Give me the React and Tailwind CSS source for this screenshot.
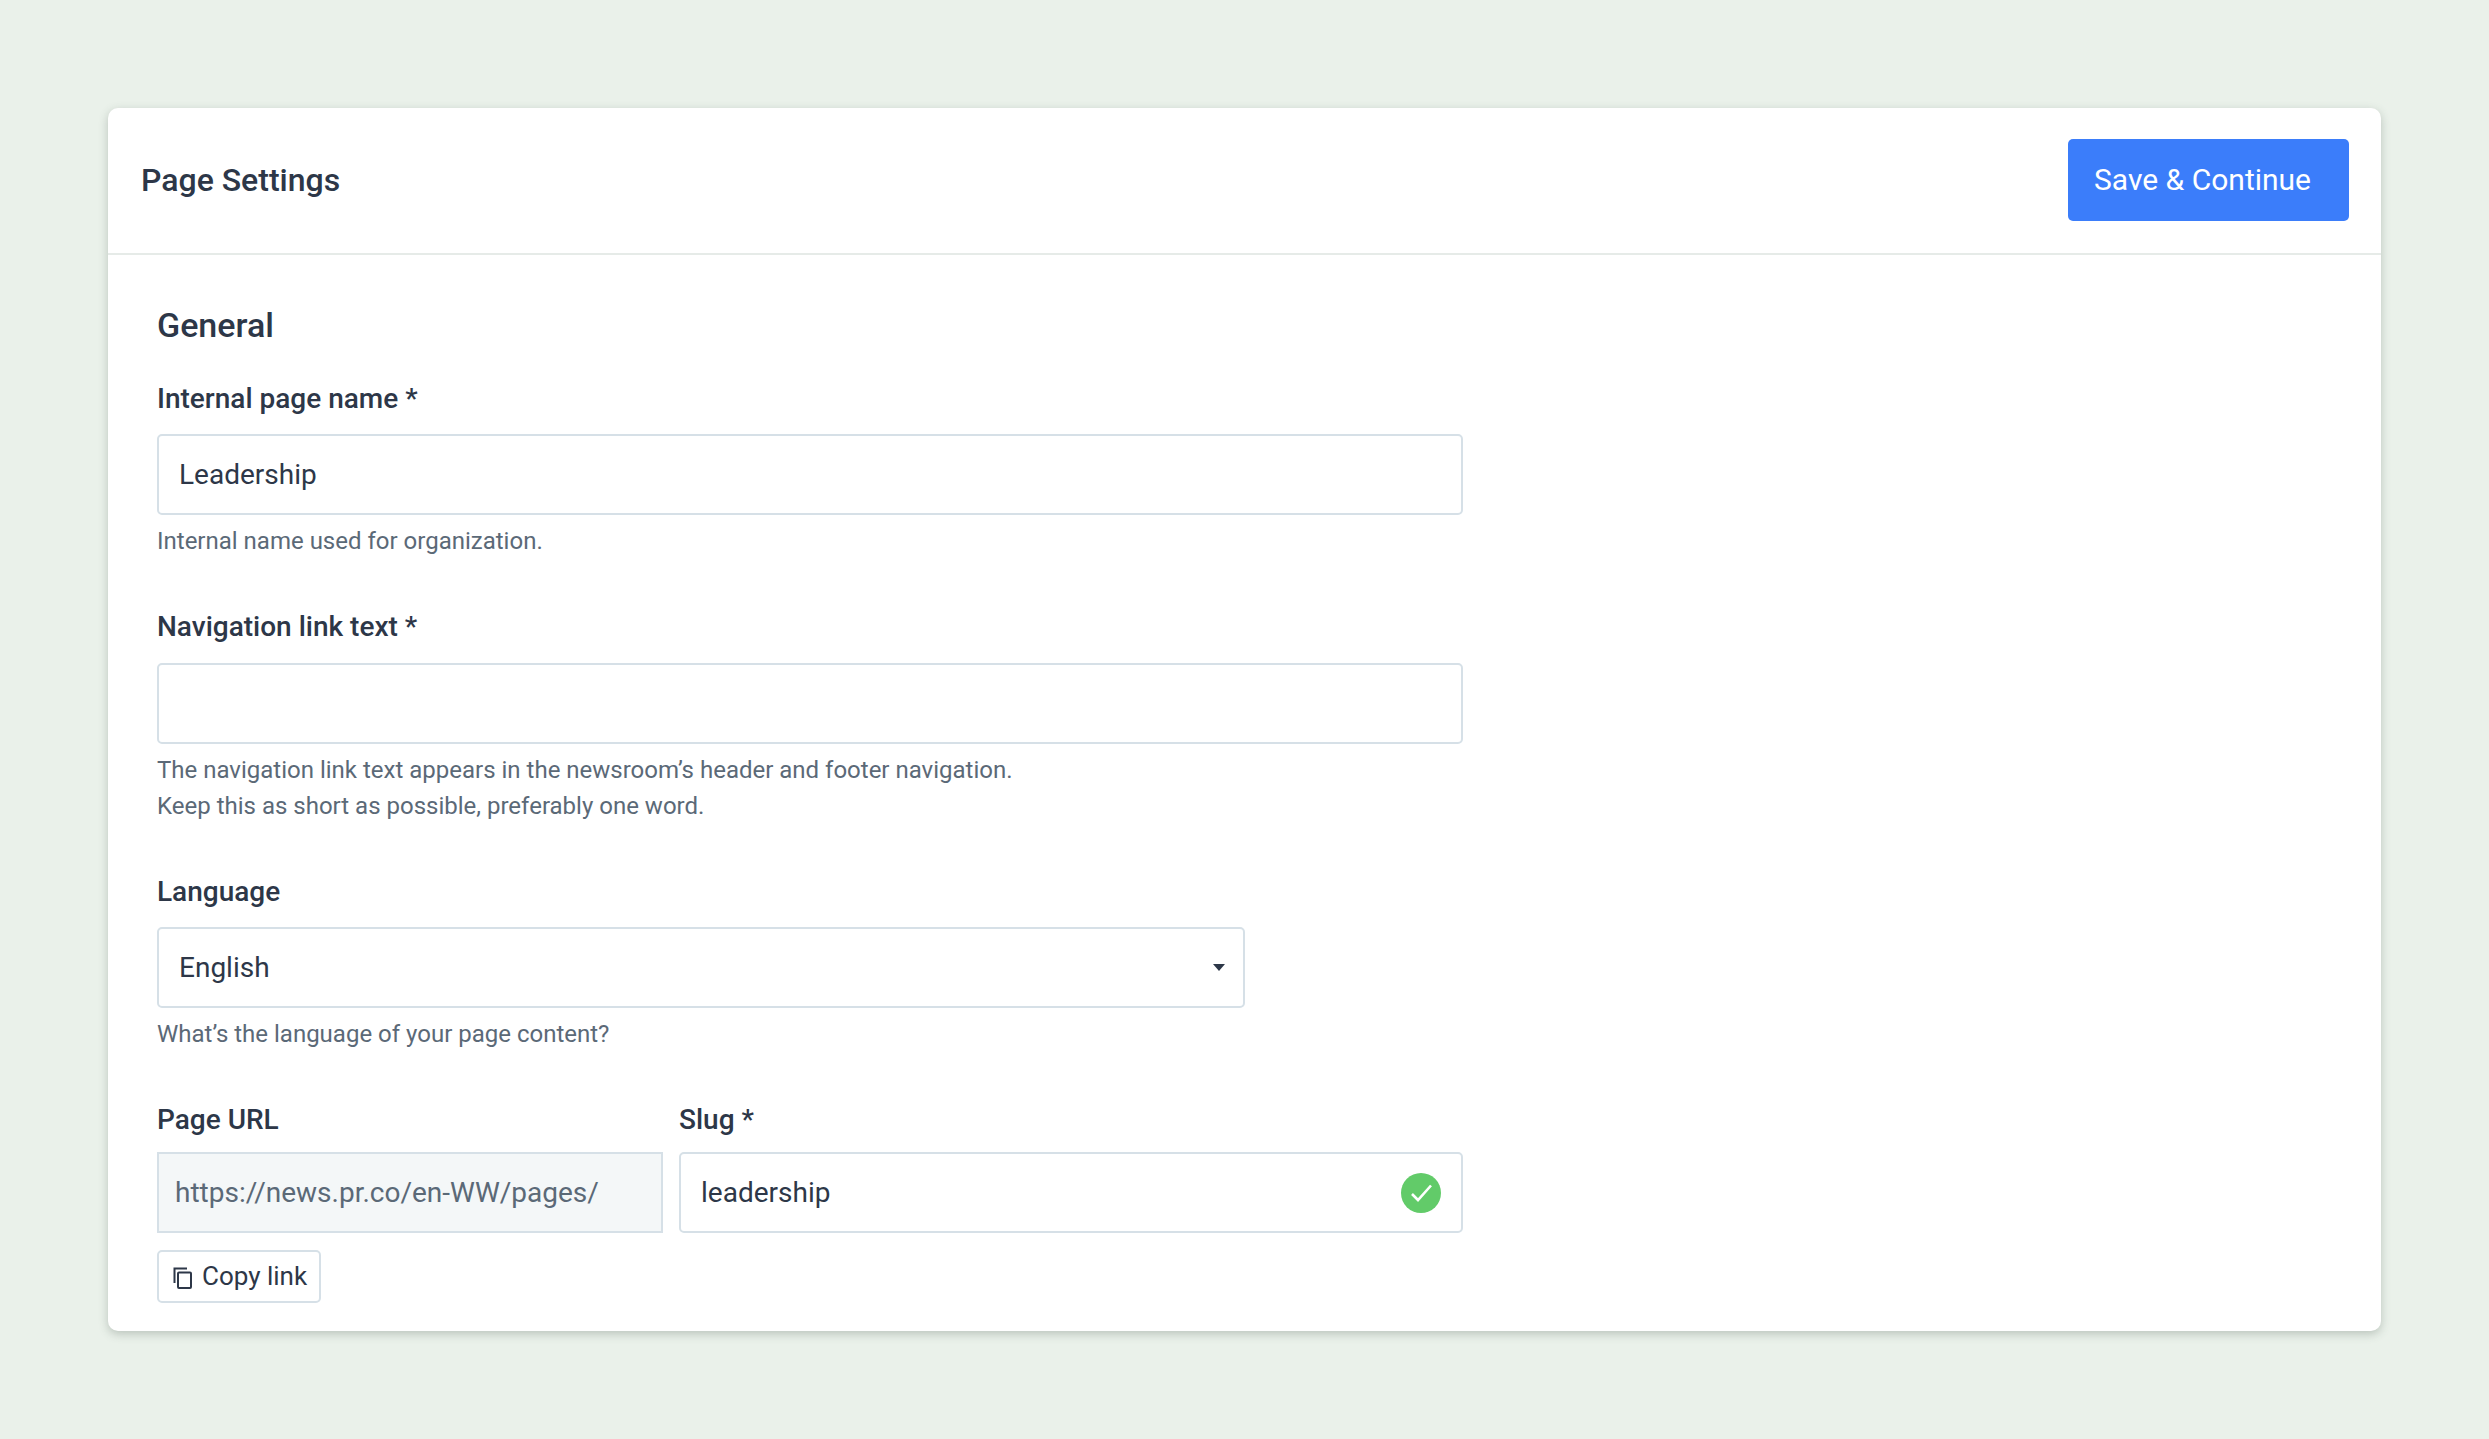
import React from 'react';

const fieldBox = "h-[81px] border-2 border-[#d6e0e7] rounded-[5px] bg-white flex items-center text-[28px] text-[#2d3748]";

const Label = ({ children, className = "mb-[17px]" }) => (
    <div className={`h-[36px] leading-[36px] text-[28px] font-medium text-[#2d3748] ${className}`}>{children}</div>
);

const Help = ({ children }) => (
    <p className="mt-[8px] text-[24px] leading-[36px] text-[#5b6977]">{children}</p>
);

const App = () => {
    return (
        <div className="min-h-screen bg-[#eaf1ea] p-[108px] font-['Roboto',sans-serif]">
            <div className="bg-white rounded-[10px] shadow-[0_3px_10px_rgba(60,80,70,0.28)]">
                <header className="h-[147px] border-b-2 border-[#e6ebe8] flex items-center justify-between pl-[33px] pr-[32px] pb-[1px]">
                    <h1 className="text-[32px] font-medium text-[#2d3748]">Page Settings</h1>
                    <button className="h-[82px] w-[281px] bg-[#3b7dfa] rounded-[5px] text-white text-[30px] text-left pl-[26px] pb-[2px]">Save &amp; Continue</button>
                </header>
                <div className="pl-[49px] pt-[46px] pb-[28px] w-[1355px]">
                    <h2 className="text-[34px] leading-[48px] font-medium text-[#2d3748] mb-[32px]">General</h2>

                    <Label>Internal page name *</Label>
                    <div className={`${fieldBox} px-[20px]`}>Leadership</div>
                    <Help>Internal name used for organization.</Help>

                    <div className="mt-[50px]">
                        <Label className="mb-[18px]">Navigation link text *</Label>
                        <div className={fieldBox}></div>
                        <Help>
                            The navigation link text appears in the newsroom’s header and footer navigation.<br />
                            Keep this as short as possible, preferably one word.
                        </Help>
                    </div>

                    <div className="mt-[50px]">
                        <Label>Language</Label>
                        <div className={`${fieldBox} w-[1088px] px-[20px] justify-between`}>
                            <span>English</span>
                            <svg width="12" height="7" viewBox="0 0 12 7" className="mr-[-2px]">
                                <path d="M0 0h12L6 7z" fill="#2d3748" />
                            </svg>
                        </div>
                        <Help>What’s the language of your page content?</Help>
                    </div>

                    <div className="mt-[50px] flex gap-[16px]">
                        <div className="w-[506px]">
                            <Label className="mb-[14px]">Page URL</Label>
                            <div className="h-[81px] border-2 border-[#d6e0e7] bg-[#f4f7f8] flex items-center pl-[16px] text-[28px] text-[#5b6977]">https://news.pr.co/en-WW/pages/</div>
                        </div>
                        <div className="w-[784px]">
                            <Label className="mb-[14px]">Slug *</Label>
                            <div className={`${fieldBox} pl-[20px] pr-[20px] justify-between`}>
                                <span>leadership</span>
                                <svg width="40" height="40" viewBox="0 0 40 40" fill="none">
                                    <circle cx="20" cy="20" r="20" fill="#62cb69" />
                                    <path d="M11 21 L17 27 L30 12.5" stroke="white" strokeWidth="2.6" />
                                </svg>
                            </div>
                        </div>
                    </div>

                    <button className="mt-[17px] h-[53px] w-[164px] border-2 border-[#d6e0e7] rounded-[5px] flex items-center pl-[14px] gap-[9px] text-[26px] text-[#2d3748]">
                        <svg width="20" height="22" viewBox="0 0 20 22" fill="none" stroke="#2d3748" strokeWidth="2" className="mt-[2px]">
                            <path d="M1.5 16V1.5H14" />
                            <rect x="5" y="5.5" width="13" height="15.5" rx="1" />
                        </svg>
                        Copy link
                    </button>
                </div>
            </div>
        </div>
    );
};

export default App;
